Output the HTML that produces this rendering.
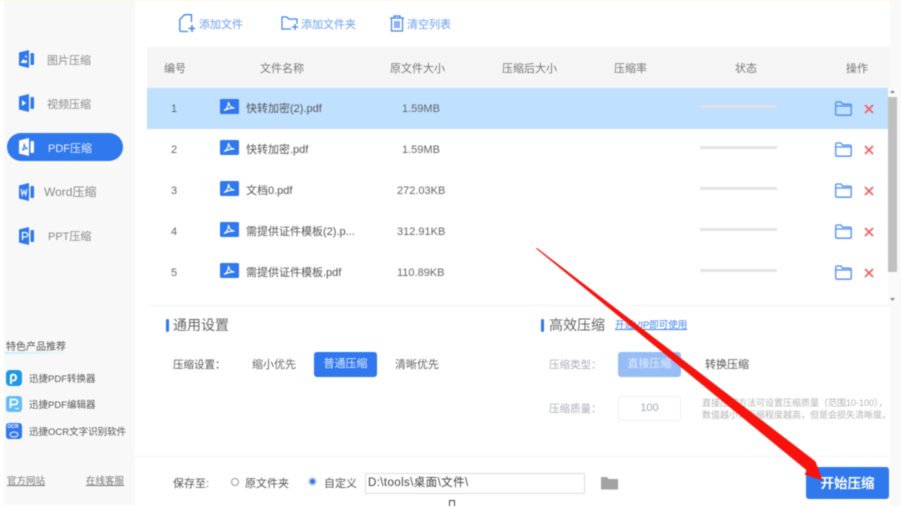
<!DOCTYPE html>
<html lang="zh"><head><meta charset="utf-8"><style>
html,body{margin:0;padding:0;background:#fff}
#r{position:relative;width:901px;height:507px;overflow:hidden;background:#fff;font-family:"Liberation Sans","Noto Sans CJK SC",sans-serif;color:#666;filter:blur(.5px)}
#r div,#r span.a,#r svg{position:absolute}
.t{white-space:nowrap;line-height:16px}
.b{background:#2f78ee}
.s{color:#8a8a8a;font-size:11px}
.h{font-size:11px;color:#777;top:61px}
.f{font-size:11px;color:#555}
.n{font-size:11px;color:#666}
</style></head><body><div id="r">
<div style="left:0;top:0;width:901px;height:1px;background:#fff6e4"></div>
<div style="left:4px;top:1px;width:131px;height:504px;background:#f8f8f8"></div>
<div style="left:890px;top:1px;width:11px;height:505px;background:#f9f9f9"></div>

<!-- sidebar nav -->
<svg style="left:19px;top:50px" width="16" height="18" viewBox="0 0 16 18"><path d="M0 2.500 10 0v18L0 15.500z" fill="#2f78ee"/><rect x="11.500" y="3" width="3.500" height="12" rx="1" fill="#2f78ee"/><path d="M2 12l2.500-3 2 2 1.500-1.500V13H2z" fill="#fff"/><circle cx="7" cy="6.500" r="1" fill="#fff"/></svg>
<div class="t s" style="left:47px;top:53px">图片压缩</div>
<svg style="left:19px;top:94px" width="16" height="18" viewBox="0 0 16 18"><path d="M0 2.500 10 0v18L0 15.500z" fill="#2f78ee"/><rect x="11.500" y="3" width="3.500" height="12" rx="1" fill="#2f78ee"/><path d="M3 6l4 3-4 3z" fill="#fff"/></svg>
<div class="t s" style="left:47px;top:97px">视频压缩</div>
<div class="b" style="left:7px;top:133px;width:116px;height:28px;border-radius:14px"></div>
<svg style="left:19px;top:138px" width="16" height="18" viewBox="0 0 16 18"><path d="M0 2.500 10 0v18L0 15.500z" fill="#fff"/><rect x="11.500" y="3" width="3.500" height="12" rx="1" fill="#fff"/><path d="M3 12.500c2-2 2.500-5 2-7 .5 3 1.500 4 3.500 5-2 0-4 .5-5.500 2z" fill="none" stroke="#2f78ee"/></svg>
<div class="t" style="left:48px;top:141px;font-size:11px;color:#e8f0ff">PDF压缩</div>
<svg style="left:19px;top:183px" width="16" height="18" viewBox="0 0 16 18"><path d="M0 2.500 10 0v18L0 15.500z" fill="#2f78ee"/><rect x="11.500" y="3" width="3.500" height="12" rx="1" fill="#2f78ee"/><path d="M2 6l1.300 6L5 7.500 6.700 12 8 6" fill="none" stroke="#fff" stroke-width="1.100"/></svg>
<div class="t s" style="left:44px;top:184px;font-size:12px">Word压缩</div>
<svg style="left:19px;top:227px" width="16" height="18" viewBox="0 0 16 18"><path d="M0 2.500 10 0v18L0 15.500z" fill="#2f78ee"/><rect x="11.500" y="3" width="3.500" height="12" rx="1" fill="#2f78ee"/><path d="M3.500 13V5.500H6.500a2 2 0 0 1 0 4.500H3.500" fill="none" stroke="#fff" stroke-width="1.300"/></svg>
<div class="t s" style="left:48px;top:229px">PPT压缩</div>

<!-- products -->
<div class="t" style="left:6px;top:340px;font-size:10px;color:#555">特色产品推荐</div>
<div style="left:5px;top:352px;width:70px;height:2px;background:linear-gradient(90deg,#bfeffb,#f8f8f8)"></div>
<div style="left:6px;top:370px;width:16px;height:16px;border-radius:4px;background:#1f97e6"></div>
<svg style="left:9px;top:372px" width="10" height="13" viewBox="0 0 10 13"><path d="M2 12V3.500a3 3 0 1 1 3 5H3.500" fill="none" stroke="#fff" stroke-width="2"/></svg>
<div style="left:6px;top:396px;width:16px;height:16px;border-radius:3px;background:#62bdf5"></div>
<svg style="left:9px;top:398px" width="11" height="13" viewBox="0 0 11 13"><path d="M1.500 10V1.500H6a2.500 2.500 0 0 1 0 5H2" fill="none" stroke="#fff" stroke-width="1.700"/><path d="M6 10.500h4" stroke="#fff"/></svg>
<div style="left:6px;top:423px;width:16px;height:16px;border-radius:3px;background:#2f78ee"></div>
<div class="t" style="left:7.500px;top:424px;font-size:5px;line-height:7px;color:#fff;font-weight:bold">OCR</div>
<svg style="left:9px;top:431px" width="10" height="7" viewBox="0 0 10 7"><ellipse cx="5" cy="3.500" rx="4" ry="2.500" fill="none" stroke="#fff"/></svg>
<div class="t" style="left:29px;top:372px;font-size:9.500px;color:#555">迅捷PDF转换器</div>
<div class="t" style="left:29px;top:398px;font-size:9.500px;color:#555">迅捷PDF编辑器</div>
<div class="t" style="left:29px;top:425px;font-size:9.500px;color:#555">迅捷OCR文字识别软件</div>
<div class="t" style="left:7px;top:474px;font-size:9.500px;color:#777;text-decoration:underline">官方网站</div>
<div class="t" style="left:86px;top:474px;font-size:9.500px;color:#777;text-decoration:underline">在线客服</div>

<!-- toolbar -->
<svg style="left:179px;top:14px" width="16" height="19" viewBox="0 0 16 19" fill="none" stroke="#3f82ef" stroke-width="1.300"><path d="M9 17.500H2A1.200 1.200 0 0 1 .8 16.300V5.500L5.500.7H12.500V8"/><path d="M13 11v7M9.500 14.500H16" stroke-width="1.500"/></svg>
<div class="t" style="left:199px;top:17px;font-size:11px;color:#6a9eef">添加文件</div>
<svg style="left:281px;top:16px" width="18" height="15" viewBox="0 0 18 15" fill="none" stroke="#3f82ef" stroke-width="1.200"><path d="M10 13H1V1h5l1.500 2H16v5"/><path d="M14 8v6M11 11h6"/></svg>
<div class="t" style="left:301px;top:17px;font-size:11px;color:#6a9eef">添加文件夹</div>
<svg style="left:390px;top:15px" width="14" height="17" viewBox="0 0 14 17" fill="none" stroke="#3f82ef" stroke-width="1.200"><path d="M0 3h14M4 3V1h6v2M1.500 3v13h11V3M5 6v7M7 6v7M9 6v7"/></svg>
<div class="t" style="left:407px;top:17px;font-size:11px;color:#6a9eef">清空列表</div>

<!-- table -->
<div style="left:147px;top:47px;width:743px;height:41px;background:#f5f5f5"></div>
<div style="left:147px;top:88px;width:741px;height:41px;background:#bfe0ff"></div>
<div class="t h" style="left:164px">编号</div>
<div class="t h" style="left:260px">文件名称</div>
<div class="t h" style="left:390px">原文件大小</div>
<div class="t h" style="left:502px">压缩后大小</div>
<div class="t h" style="left:614px">压缩率</div>
<div class="t h" style="left:735px">状态</div>
<div class="t h" style="left:846px">操作</div>

<div class="t n" style="left:171px;top:101px">1</div>
<div class="t n" style="left:171px;top:142px">2</div>
<div class="t n" style="left:171px;top:183px">3</div>
<div class="t n" style="left:171px;top:224px">4</div>
<div class="t n" style="left:171px;top:265px">5</div>

<svg width="0" height="0" style="left:0;top:0"><defs>
<g id="p"><rect width="19" height="15" rx="1.500" fill="#2f78ee"/><path d="M4 11.500c3-1.500 4.500-5 4.500-8.500.5 3.500 2 5.500 6 6-3.500-.2-7 .7-10.500 2.500z" fill="none" stroke="#fff" stroke-width="1.200"/></g>
<g id="o"><path d="M.7 13V2.200A1.200 1.200 0 0 1 2 1H6l1.500 2.200H15a1.200 1.200 0 0 1 1.200 1.200V13A1.200 1.200 0 0 1 15 14.200H2A1.200 1.200 0 0 1 .7 13z M1 5H16" fill="none" stroke="#4d8df2" stroke-width="1.300"/></g>
<g id="x"><path d="M1 1l8 8M9 1L1 9" stroke="#f4605f" stroke-width="1.700" fill="none"/></g>
</defs></svg>
<svg style="left:220px;top:99px" width="19" height="15"><use href="#p"/></svg>
<svg style="left:220px;top:140px" width="19" height="15"><use href="#p"/></svg>
<svg style="left:220px;top:181px" width="19" height="15"><use href="#p"/></svg>
<svg style="left:220px;top:222px" width="19" height="15"><use href="#p"/></svg>
<svg style="left:220px;top:263px" width="19" height="15"><use href="#p"/></svg>
<div class="t f" style="left:246px;top:101px">快转加密(2).pdf</div>
<div class="t f" style="left:246px;top:142px">快转加密.pdf</div>
<div class="t f" style="left:246px;top:183px">文档0.pdf</div>
<div class="t f" style="left:246px;top:224px">需提供证件模板(2).p...</div>
<div class="t f" style="left:246px;top:265px">需提供证件模板.pdf</div>
<div class="t n" style="left:402px;top:101px">1.59MB</div>
<div class="t n" style="left:402px;top:142px">1.59MB</div>
<div class="t n" style="left:397px;top:183px">272.03KB</div>
<div class="t n" style="left:397px;top:224px">312.91KB</div>
<div class="t n" style="left:397px;top:265px">110.89KB</div>

<div style="left:700px;top:105px;width:77px;height:3px;border-radius:2px;background:#dfe3e6"></div>
<div style="left:700px;top:146px;width:77px;height:3px;border-radius:2px;background:#e4e4e4"></div>
<div style="left:700px;top:187px;width:77px;height:3px;border-radius:2px;background:#e4e4e4"></div>
<div style="left:700px;top:228px;width:77px;height:3px;border-radius:2px;background:#e4e4e4"></div>
<div style="left:700px;top:269px;width:77px;height:3px;border-radius:2px;background:#e4e4e4"></div>

<svg style="left:835px;top:101px" width="17" height="15"><use href="#o"/></svg>
<svg style="left:835px;top:142px" width="17" height="15"><use href="#o"/></svg>
<svg style="left:835px;top:183px" width="17" height="15"><use href="#o"/></svg>
<svg style="left:835px;top:224px" width="17" height="15"><use href="#o"/></svg>
<svg style="left:835px;top:265px" width="17" height="15"><use href="#o"/></svg>
<svg style="left:864px;top:104px" width="10" height="10"><use href="#x"/></svg>
<svg style="left:864px;top:145px" width="10" height="10"><use href="#x"/></svg>
<svg style="left:864px;top:186px" width="10" height="10"><use href="#x"/></svg>
<svg style="left:864px;top:227px" width="10" height="10"><use href="#x"/></svg>
<svg style="left:864px;top:268px" width="10" height="10"><use href="#x"/></svg>

<!-- scrollbar -->
<div style="left:888px;top:88px;width:9px;height:217px;background:#fbfbfb"></div>
<div style="left:888px;top:97px;width:9px;height:175px;background:#c0c0c0"></div>
<svg style="left:890px;top:90px" width="5" height="4"><path d="M2.500 0 5 3H0z" fill="#888"/></svg>
<svg style="left:890px;top:298px" width="5" height="4"><path d="M0 0h5L2.500 3z" fill="#888"/></svg>

<div style="left:147px;top:305px;width:743px;height:1px;background:#f3f3f3"></div>

<!-- settings -->
<div class="b" style="left:166px;top:319px;width:3px;height:13px;border-radius:2px"></div>
<div class="t" style="left:173px;top:317px;font-size:14px;color:#666">通用设置</div>
<div class="t" style="left:173px;top:357px;font-size:10.500px;color:#555">压缩设置：</div>
<div class="t" style="left:252px;top:357px;font-size:11px;color:#666">缩小优先</div>
<div class="b t" style="left:314px;top:352px;width:63px;height:25px;border-radius:3px;line-height:25px;text-align:center;color:#e4eeff;font-size:11px">普通压缩</div>
<div class="t" style="left:395px;top:357px;font-size:11px;color:#666">清晰优先</div>

<div class="b" style="left:541px;top:319px;width:3px;height:13px;border-radius:2px"></div>
<div class="t" style="left:549px;top:317px;font-size:14px;color:#666">高效压缩</div>
<div class="t" style="left:615px;top:318px;font-size:9.500px;color:#3f82ef;text-decoration:underline">开通VIP即可使用</div>
<div class="t" style="left:549px;top:357px;font-size:10.500px;color:#aab0bb">压缩类型：</div>
<div class="t" style="left:549px;top:401px;font-size:10.500px;color:#aab0bb">压缩质量：</div>
<div class="t" style="left:618px;top:352px;width:63px;height:25px;border-radius:3px;background:#97bdf7;line-height:25px;text-align:center;color:#e4eeff;font-size:11px">直接压缩</div>
<div class="t" style="left:705px;top:357px;font-size:11px;color:#555">转换压缩</div>
<div class="t" style="left:618px;top:396px;width:61px;height:23px;border:1px solid #f0f0f0;border-radius:3px;line-height:23px;text-align:center;color:#a3a9b5;font-size:11px">100</div>
<div class="t" style="left:702px;top:397px;font-size:9px;line-height:12px;color:#b3b3b3;white-space:pre">直接压缩方法可设置压缩质量（范围10-100），
数值越小，压缩程度越高，但是会损失清晰度。</div>

<div style="left:135px;top:456px;width:755px;height:1px;background:#f5f5f5"></div>

<!-- bottom -->
<div class="t" style="left:173px;top:476px;font-size:11px;color:#555">保存至:</div>
<div style="left:231px;top:478px;width:6px;height:6px;border:1.200px solid #999;border-radius:50%"></div>
<div class="t" style="left:245px;top:476px;font-size:11px;color:#555">原文件夹</div>
<div style="left:308px;top:477px;width:9px;height:9px;border-radius:50%;background:#cfd3da"></div>
<div style="left:310px;top:479px;width:5px;height:5px;border-radius:50%;background:#2f78ee"></div>
<div class="t" style="left:324px;top:476px;font-size:11px;color:#555">自定义</div>
<div class="t" style="left:365px;top:473px;width:216px;height:19px;border:1px solid #ddd;line-height:19px;padding-left:2px;font-size:11.500px;letter-spacing:.4px;color:#444">D:\tools\桌面\文件\</div>
<svg style="left:601px;top:476px" width="17" height="14" viewBox="0 0 17 14"><path d="M0 13V1h6l1.500 2H17v10.500H0z" fill="#a3a3a3"/></svg>
<div style="left:449px;top:500px;width:6px;height:6px;border:1px solid #444;border-bottom:0;box-sizing:border-box"></div>
<div class="b t" style="left:806px;top:467px;width:83px;height:32px;border-radius:3px;line-height:33px;text-align:center;color:#fff;font-size:13.500px;font-weight:bold;background:#2f78ee">开始压缩</div>

<!-- red arrow -->
<svg style="left:0;top:0" width="901" height="507" viewBox="0 0 901 507"><path d="M536 248.500 537 248 813 459.500 815.500 461.500 822.500 480.500 804.500 474.500 807 470.500z" fill="#f8120c"/></svg>
</div></body></html>
